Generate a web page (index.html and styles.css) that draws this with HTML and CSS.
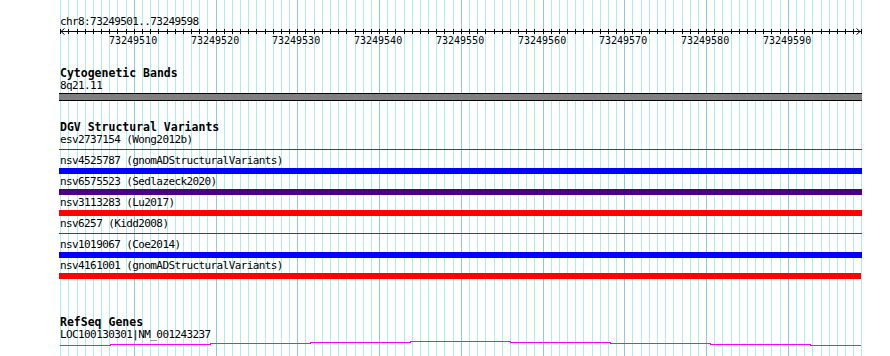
FILE: index.html
```html
<!DOCTYPE html>
<html lang="en">
<head>
  <meta charset="UTF-8" />
  <title>Genome Browser - chr8:73249501..73249598</title>
  <link rel="stylesheet" href="styles.css">
</head>
<body>
  <div class="browser">

    <!-- base grid, filled in by the script below -->
    <svg class="grid" id="grid" width="890" height="356"></svg>

    <div class="view">

      <!-- ruler -->
      <div class="ruler">
        <div class="locus">chr8:73249501..73249598</div>
        <svg class="scale" id="scale" width="802" height="7"></svg>
        <div class="ticklabels" id="ticklabels"></div>
      </div>

      <!-- Cytogenetic Bands -->
      <div class="track cyto">
        <div class="track-label">Cytogenetic Bands</div>
        <div class="feat-label">8q21.11</div>
        <div class="band"></div>
      </div>

      <!-- DGV Structural Variants -->
      <div class="track dgv">
        <div class="track-label">DGV Structural Variants</div>
        <div class="feature">
          <div class="feat-label">esv2737154 (Wong2012b)</div>
          <div class="thin"></div>
        </div>
        <div class="feature">
          <div class="feat-label">nsv4525787 (gnomADStructuralVariants)</div>
          <div class="bar blue"></div>
        </div>
        <div class="feature">
          <div class="feat-label">nsv6575523 (Sedlazeck2020)</div>
          <div class="bar purple"></div>
        </div>
        <div class="feature">
          <div class="feat-label">nsv3113283 (Lu2017)</div>
          <div class="bar red"></div>
        </div>
        <div class="feature">
          <div class="feat-label">nsv6257 (Kidd2008)</div>
          <div class="thin"></div>
        </div>
        <div class="feature">
          <div class="feat-label">nsv1019067 (Coe2014)</div>
          <div class="bar blue"></div>
        </div>
        <div class="feature">
          <div class="feat-label">nsv4161001 (gnomADStructuralVariants)</div>
          <div class="bar red short"></div>
        </div>
      </div>

      <!-- RefSeq Genes -->
      <div class="track refseq">
        <div class="track-label">RefSeq Genes</div>
        <div class="feat-label">LOC100130301|NM_001243237</div>
        <svg class="gene" width="802" height="5" shape-rendering="crispEdges">
          <rect x="0" y="4" width="51" height="1" />
          <rect x="50" y="3" width="101" height="1" />
          <rect x="150" y="2" width="101" height="1" />
          <rect x="250" y="1" width="101" height="1" />
          <rect x="350" y="0" width="101" height="1" />
          <rect x="450" y="1" width="101" height="1" />
          <rect x="550" y="2" width="101" height="1" />
          <rect x="650" y="3" width="101" height="1" />
          <rect x="750" y="4" width="51" height="1" />
        </svg>
      </div>

    </div>
  </div>

  <script>
    // one base = 8.175px, 73249510 sits at x = 133.8
    const ORIGIN = 133.8;
    const BP = 8.175;
    const VIEW_LEFT = 60;
    const NS = 'http://www.w3.org/2000/svg';

    const grid   = document.getElementById('grid');
    const scale  = document.getElementById('scale');
    const labels = document.getElementById('ticklabels');

    function rect(parent, x, y, w, h, cls) {
      const r = document.createElementNS(NS, 'rect');
      r.setAttribute('x', x);
      r.setAttribute('y', y);
      r.setAttribute('width', w);
      r.setAttribute('height', h);
      if (cls) r.setAttribute('class', cls);
      parent.appendChild(r);
    }

    // axis line
    rect(scale, 0, 3, 801, 1, 'axis');

    for (let k = -9; k <= 89; k++) {
      const x = Math.round(ORIGIN + BP * k);
      const major = k % 10 === 0;
      rect(grid, x, 0, 1, 356, major ? 'major' : 'minor');
      rect(scale, x - VIEW_LEFT, 1, 1, 5, 'tick');

      if (major) {
        const span = document.createElement('span');
        span.textContent = 73249510 + k;
        span.style.left = (x - VIEW_LEFT - 25) + 'px';
        labels.appendChild(span);
      }
    }

    // arrow heads at both ends
    const arrows = document.createElementNS(NS, 'path');
    arrows.setAttribute('d', 'M4.5 0.5 L1 3.5 L4.5 6.5 M796.5 0.5 L800 3.5 L796.5 6.5');
    arrows.setAttribute('class', 'arrow');
    scale.appendChild(arrows);
  </script>
</body>
</html>
```

FILE: styles.css
```css
body {
  margin: 0;
  padding: 0;
  background: #fff;
  color: #000;
  font-family: "DejaVu Sans Mono", monospace;
}
.browser {
  position: relative;
  width: 890px;
  height: 356px;
  overflow: hidden;
}
.grid {
  position: absolute;
  left: 0;
  top: 0;
  shape-rendering: crispEdges;
}
.grid .minor {
  fill: #aeeef0;
}
.grid .major {
  fill: #8ccbe8;
}
.view {
  position: relative;
  margin-left: 60px;
  width: 802px;
}
.locus {
  padding-top: 16px;
  font-size: 11px;
  line-height: 12px;
  letter-spacing: -0.6px;
}
.scale {
  display: block;
  overflow: visible;
}
.scale .axis,
.scale .tick {
  fill: #000;
  shape-rendering: crispEdges;
}
.scale .arrow {
  fill: none;
  stroke: #000;
  stroke-width: 1;
}
.ticklabels {
  position: relative;
  height: 11px;
  font-size: 10px;
  line-height: 11px;
}
.ticklabels span {
  position: absolute;
  top: 0;
}
.track-label {
  font-weight: bold;
  font-size: 11.5px;
  line-height: 13px;
  white-space: nowrap;
}
.feat-label {
  font-size: 11px;
  line-height: 12px;
  letter-spacing: -0.6px;
  white-space: nowrap;
}
.cyto {
  margin-top: 21px;
}
.band {
  margin-top: 1px;
  margin-left: -1px;
  height: 6px;
  border-top: 1px solid #000;
  border-bottom: 1px solid #000;
  background: #808080;
}
.dgv {
  margin-top: 20px;
}
.feature {
  height: 21px;
}
.bar {
  margin-top: 1px;
  margin-left: -1px;
  height: 6px;
}
.bar.short {
  margin-right: 1px;
}
.thin {
  margin-top: 3px;
  margin-left: -1px;
  height: 1px;
  background: #d00;
}
.blue {
  background: #00f;
}
.purple {
  background: #4b0082;
}
.red {
  background: #f00;
}
.refseq {
  margin-top: 35px;
}
.gene {
  display: block;
  fill: #f0f;
}
```
